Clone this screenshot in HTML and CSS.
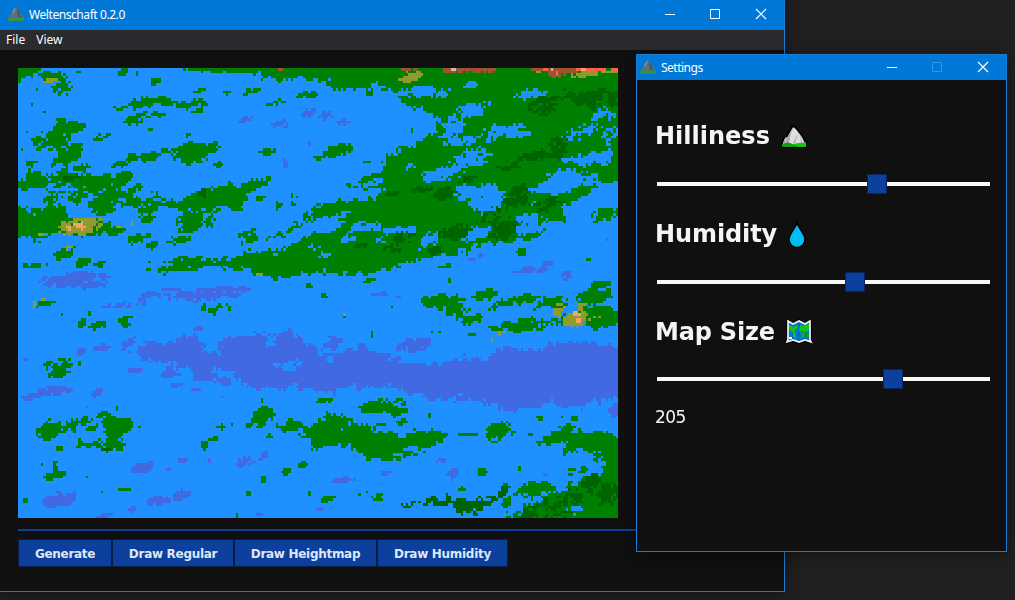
FILE: index.html
```
<!DOCTYPE html>
<html lang="en">
<head>
<meta charset="utf-8">
<title>Weltenschaft 0.2.0</title>
<link rel="stylesheet" href="styles.css">
</head>
<body>
<svg class="defs" width="0" height="0">
  <symbol id="peak" viewBox="0 0 16 16">
    <path d="M1 13 2 9 4 7 5 4 7 2 8 0 10 3 12 5 13 8 15 10 15 13Z" fill="#596f7b"/>
    <path d="M8 1 7 5 5 8 4 7 5 4Z" fill="#7d8d98"/>
    <path d="M9 2 12 6 12 9 14 12 10 11Z" fill="#425968"/>
    <path d="M0 12 4 11 8 12 12 11 16 12V15H0Z" fill="#33924b"/>
  </symbol>
</svg>
<main class="desktop">
  <section class="window main-window">
    <header class="titlebar">
      <svg class="app-icon"><use href="#peak"/></svg>
      <span class="title">Weltenschaft 0.2.0</span>
      <svg class="controls" viewBox="0 0 106 12"><path d="M1 6.500H11M46.500 1.500H55.500V10.500H46.500Z"/><path class="cross" d="M92 1 102 11M102 1 92 11"/></svg>
    </header>
    <nav class="menu"><span>File</span><span>View</span></nav>
    <div class="content">
      <canvas class="map" id="map" width="240" height="180"></canvas>
      <div class="rule"></div>
      <div class="buttons">
        <button class="generate">Generate</button><button class="regular">Draw Regular</button><button class="height">Draw Heightmap</button><button class="humidity">Draw Humidity</button>
      </div>
    </div>
  </section>
  <section class="window settings">
    <header class="titlebar">
      <svg class="app-icon"><use href="#peak"/></svg>
      <span class="title">Settings</span>
      <svg class="controls" viewBox="0 0 106 12"><path d="M1 6.500H11"/><path class="disabled" d="M46.500 1.500H55.500V10.500H46.500Z"/><path class="cross" d="M92 1 102 11M102 1 92 11"/></svg>
    </header>
    <div class="panel">
      <div class="setting">
        <h2><span class="hill-label">Hilliness</span>
          <svg class="emoji hill" viewBox="0 0 28 26"><path d="M2 23V19L4 14 7 12 9 8 12 3 14 2 17 5 20 9 23 13 26 19V23Z" fill="#dedede" stroke="#000" stroke-width="2"/><path d="M14 2 11 9 9 19 5 19 8 12ZM18 9 15 19 13 19ZM6 12 5 19 3 19Z" fill="#aaa"/><path d="M20 10 23 19 21 19Z" fill="#bbb"/><path d="M2 20 8 18.500 13 20 19 19 26 18.500V23H2Z" fill="#16c60c"/><path d="M2 20 8 18.500 14 21 18 22V23H2Z" fill="#139c18"/></svg></h2>
        <div class="slider"><i class="thumb hill-thumb"></i></div>
      </div>
      <div class="setting">
        <h2><span class="humid-label">Humidity</span>
          <svg class="emoji drop" viewBox="0 0 18 28"><path d="M9 2C7 8 1 13 1 18.500a8 8 0 0 0 16 0C17 13 11 8 9 2Z" fill="#00bcf2" stroke="#000" stroke-width="1.500"/></svg></h2>
        <div class="slider"><i class="thumb humid-thumb"></i></div>
      </div>
      <div class="setting">
        <h2><span class="size-label">Map Size</span>
          <svg class="emoji world" viewBox="0 0 28 26"><path id="sheet" d="M3 2 8 5 14 2 20 5 25 2V21L26 23 20 21 14 23 8 21 2 23 3 20Z" fill="#0078d7" stroke="#000" stroke-width="4"/><path d="M3 2 8 5 14 2 20 5 25 2V21L26 23 20 21 14 23 8 21 2 23 3 20Z" fill="#0078d7" stroke="#f2f2f2" stroke-width="1.700"/><path d="M8 6V20M14 4V21M20 6V20" stroke="#005eb0"/><path d="M4 6 8 8 12 6 13 9 11 10 9 13 11 15 10 19 8 18 8 14 5 11 4 8ZM15 6 18 7 24 5 24 10 22 13 20 12 19 18 17 18 16 13 14 12Z" fill="#16c60c"/><path d="M16 11 19 12 18 16 17 17M21 15H24V18H21Z" fill="#139c18"/><path d="M4 18H7V20H4Z" fill="#fff"/></svg></h2>
        <div class="slider"><i class="thumb size-thumb"></i></div>
        <output>205</output>
      </div>
    </div>
  </section>
</main>
<script src="map.js"></script>
</body>
</html>
```

FILE: styles.css
```
* { box-sizing: border-box; }
body { margin: 0; overflow: hidden; background: #202020; font-family: Verdana, "DejaVu Sans", sans-serif; color: #f5f5f5; }
.defs { position: absolute; }
.desktop { position: relative; width: 1015px; height: 600px; overflow: hidden; background: #202020; }
.window { position: absolute; display: flex; flex-direction: column; background: #101010; border: 1px solid #167fd4; box-shadow: 0 3px 14px rgba(0, 0, 0, .4); }
.main-window { left: 0; top: 0; width: 785px; height: 592px; border-top: 0; border-left: 0; }
.settings { left: 636px; top: 54px; width: 371px; height: 498px; }
.titlebar { display: flex; align-items: center; flex: none; background: #0078d7; height: 30px; padding: 0 18px 2px 8px; font: 12px "Noto Sans", sans-serif; color: #fff; }
.app-icon { width: 16px; height: 16px; margin-right: 5px; }
.title { flex: 1; white-space: nowrap; letter-spacing: -.43px; }
.controls { width: 106px; height: 12px; fill: none; stroke: #fff; stroke-width: 1; margin-right: -4px; }
.controls .disabled { stroke: #3294e2; }
.controls .cross { stroke-width: 1.2; }
.settings .titlebar { height: 25px; padding-left: 3px; padding-right: 18px; padding-bottom: 1px; }
.settings .title { letter-spacing: -.5px; }
.menu { display: flex; flex: none; gap: 11px; height: 20px; align-items: center; padding: 0 0 2px 6px; background: #2a2b2e; font: 12px "Noto Sans", sans-serif; color: #fff; }
.content { padding: 18px 0 0 18px; }
.map { display: block; width: 600px; height: 450px; image-rendering: pixelated; }
.rule { height: 2px; margin: 11px 18px 8px 0; background: #0d409c; }
.buttons { display: flex; }
.buttons button { height: 28px; padding: 1px 0 0; border: 1px solid #071d44; background: #0d409c; color: #dde7f8; font: bold 12px Verdana, "DejaVu Sans", sans-serif; letter-spacing: -.3px; white-space: nowrap; }
.buttons .generate { width: 94px; }
.buttons .regular { width: 122px; }
.buttons .height { width: 143px; }
.buttons .humidity { width: 131px; }
.panel { padding: 41px 16px 0 18px; }
.setting { height: 98px; }
h2 { display: flex; align-items: center; margin: 0; height: 30px; font-size: 24px; line-height: 30px; }
h2 span { white-space: nowrap; }
.hill-label { width: 125px; }
.humid-label { width: 133px; letter-spacing: -.1px; }
.size-label { width: 130px; letter-spacing: -.2px; }
.emoji { width: 28px; height: 26px; flex: none; margin-top: 1px; }
.emoji.drop { width: 18px; height: 28px; }
.emoji.world { margin-top: 0; }
.slider { position: relative; width: 333px; height: 4px; margin: 31px 0 0 2px; background: #f8f8f5; }
.setting:last-child .slider { margin-top: 30px; }
.thumb { position: absolute; top: -8px; width: 20px; height: 20px; border: 1px solid #06235c; background: #0d409c; }
.hill-thumb { left: 210px; }
.humid-thumb { left: 188px; }
.size-thumb { left: 226px; }
output { display: block; margin-top: 25px; font-size: 17px; line-height: 22px; letter-spacing: -.6px; }
```

FILE: map.js
```
const W = 240, H = 180;
const cells = new Array(W * H).fill('w');
const colors = { w: '#1e90ff', r: '#4169e1', g: '#008000', d: '#006400', o: '#8f9a30', s: '#f4a460', b: '#a0522d', t: '#ff6347', c: '#c0c0c0' };

function hash(x, y) {
  let n = Math.imul(x, 374761393) + Math.imul(y, 668265263) + 9187;
  n = Math.imul(n ^ (n >>> 13), 1274126177);
  return ((n ^ (n >>> 16)) >>> 0) / 4294967296;
}
function noise(x, y) {
  const i = Math.floor(x), j = Math.floor(y), u = x - i, v = y - j;
  const a = hash(i, j) * (1 - u) + hash(i + 1, j) * u;
  const b = hash(i, j + 1) * (1 - u) + hash(i + 1, j + 1) * u;
  return a * (1 - v) + b * v;
}
function grain(x, y) {
  return noise(x / 2.2 + 50, (y + x * 0.35) / 1.1 + 30) * 0.62 + hash(x + 900, y) * 0.38;
}
function inside(x, y, p) {
  let hit = false;
  for (let i = 0, j = p.length - 2; i < p.length; j = i, i += 2) {
    if ((p[i + 1] > y) !== (p[j + 1] > y) && x < (p[j] - p[i]) * (y - p[i + 1]) / (p[j + 1] - p[i + 1]) + p[i]) hit = !hit;
  }
  return hit;
}

/* p: color density outline; b: color followed by x,y,width,height,density patches. */
function sector(ox, oy, text) {
  for (const line of text.trim().split('\n')) {
    const t = line.trim().split(/\s+/), kind = t[0], color = t[1];
    if (kind === 'p') {
      const density = +t[2];
      const p = t.slice(3).flatMap(q => q.split(',').map(Number)).map((v, i) => v / 7.5 + (i % 2 ? oy : ox));
      const xs = p.filter((_, i) => i % 2 === 0), ys = p.filter((_, i) => i % 2);
      const x0 = Math.max(0, Math.floor(Math.min(...xs) - 3)), x1 = Math.min(W - 1, Math.max(...xs) + 3);
      const y0 = Math.max(0, Math.floor(Math.min(...ys) - 3)), y1 = Math.min(H - 1, Math.max(...ys) + 3);
      for (let y = y0; y <= y1; y++) for (let x = x0; x <= x1; x++) {
        const jx = (noise(x / 2, y / 2) - .5) * 3 + (hash(x, y) - .5) * 3;
        const jy = (noise(x / 2 + 80, y / 2) - .5) * 2.5 + (hash(x + 300, y) - .5) * 1.4;
        const px = x < 2 || x > W - 3 ? x + .5 : x + .5 + jx;
        const py = y < 1 || y > H - 2 ? y + .5 : y + .5 + jy;
        if (inside(px, py, p) && grain(x, y) < density * .75 + .25) cells[y * W + x] = color;
      }
    } else {
      for (const item of t.slice(2)) {
        const [bx, by, bw, bh, dens = 1] = item.split(',').map(Number);
        const small = bw < 17 && bh < 17;
        const cx = bx / 7.5 + ox, cy = by / 7.5 + oy;
        const rx = Math.max(.7, bw / (small ? 15 : 13)), ry = Math.max(.6, bh / (small ? 15 : 13));
        const x0 = Math.max(0, Math.floor(cx - rx - 1)), x1 = Math.min(W - 1, cx + rx + 1);
        const y0 = Math.max(0, Math.floor(cy - ry - 1)), y1 = Math.min(H - 1, cy + ry + 1);
        for (let y = y0; y <= y1; y++) for (let x = x0; x <= x1; x++) {
          const dx = (x + .5 - cx) / rx, dy = (y + .5 - cy) / ry;
          const slant = rx > 2 ? dy + dx * .35 : dy;
          const r = dx * dx + slant * slant;
          if (r < 1.3 && grain(x, y) < dens * .62 + .3 - r * (small ? .2 : .36)) cells[y * W + x] = color;
        }
      }
    }
  }
}

sector(0, -3.2, `
p g 1 495,24 900,24 900,60 840,55 790,62 730,50 720,38 660,42 600,36 530,32
p g .65 0,24 75,24 70,35 140,35 140,52 100,62 60,48 20,55 0,62
p g .65 280,140 330,128 380,108 450,112 520,125 575,118 570,135 500,140 420,135 380,142 330,140 300,152
b g 135,82,60,30,.85 315,38,30,22,.9 358,40,20,12,.7 412,62,28,18,.9 370,175,90,40,.45 340,182,35,18,.9 420,165,50,16,.6 540,150,80,20,.5 545,92,30,8 630,88,40,25,.5 695,92,45,18,.8 870,104,60,16,.9 770,128,60,18,.5
b g 150,203,80,34 130,180,30,12,.7 100,240,120,50,.8 160,278,60,45,.9 130,300,60,60,.5 30,315,50,30,.5 190,325,60,30,.7 255,232,60,24,.5
p g 1 0,355 20,335 60,335 90,352 88,380 50,385 20,392 0,385
b g 150,355,100,46 235,372,100,44 310,355,60,35,.9 265,420,80,65 330,415,50,50,.8 110,410,60,50,.6 180,410,60,50,.7 350,385,50,30,.7 390,430,70,60,.7 390,478,40,20,.8
p g 1 0,430 20,455 70,455 110,440 150,445 160,480 215,480 270,490 275,515 220,520 200,525 130,520 100,525 50,530 20,525 0,530
b g 290,512,45,30,.9 140,578,50,36,.9 60,535,50,30,.5 360,535,60,30,.7 405,555,40,20 480,540,70,22,.7 195,608,35,25 245,610,40,30,.6 50,615,70,14,.6 390,630,8,8
b g 340,290,30,22 390,288,55,25 300,315,45,18 600,313,20,20 520,275,115,48 580,262,40,35,.7 745,277,45,20 550,305,50,15,.5 510,307,12,16 440,270,20,12
p g 1 410,435 480,420 510,405 560,385 610,378 680,372 740,352 775,348 735,378 690,400 688,430 665,452 600,438 540,455 500,450 440,440
b g 520,485,80,50,.9 580,470,60,60,.5 690,530,65,40,.7 505,610,110,36 440,620,40,40,.6
p g 1 560,600 640,592 700,572 760,580 800,570 850,570 900,575 900,640 850,635 830,655 770,655 720,640 670,625 620,622 580,610
p g .55 730,540 790,520 840,480 880,450 900,440 900,480 840,505 800,530 740,545
p g .7 760,570 820,545 900,515 900,555 850,575 800,570
b g 780,435,20,40,.6 825,420,35,30,.7 872,679,20,12 725,412,22,14 395,606,8,8 40,133,8,8 78,156,8,8 25,217,8,8 10,268,8,8 146,104,8,8 55,88,8,8 182,36,8,8 397,207,14,8 508,226,14,10
b o 185,500,100,42,.9 140,500,40,30,.7 235,488,50,30,.6 100,60,40,12,.9 725,642,20,10 68,524,16,10 150,565,40,20,.5 340,488,8,8 300,500,10,8 813,600,8,8
b s 180,490,35,8 185,502,25,22,.65 152,502,8,14
b d 552,397,20,26,.9 160,350,40,14 412,65,16,8
b b 787,26,16,8
b r 685,178,45,45,.5 785,192,55,22,.8 868,160,35,25,.8 802,310,14,28,.8 165,658,170,38,.9 230,675,70,22,.9 620,686,140,10 460,686,50,8 873,249,8,12
`);
sector(120, -3.2, `
p g 1 0,24 900,24 900,360 850,370 790,410 740,430 730,480 690,500 650,530 600,545 530,545 440,570 400,585 350,590 270,605 200,625 120,640 60,638 0,635 0,430 100,425 160,412 210,395 150,385 100,385 130,350 200,335 200,300 240,265 300,250 310,235 350,220 360,180 320,145 250,128 240,105 180,70 130,90 80,95 40,75 0,60
b w 300,97,120,28,.9 370,100,60,26,.7 640,102,80,25,.9 460,75,35,20 460,150,100,45,.75 400,205,60,60,.85 430,240,100,30,.8 570,215,130,50,.7 855,165,70,50,.7 880,220,50,50,.7
p w .8 720,235 780,205 850,190 820,215 760,237
p w 1 730,290 790,285 850,275 880,270 875,300 800,315 740,305
b w 730,365,110,60 810,360,60,50,.6 460,295,110,50,.7 370,340,110,40,.75 170,365,60,25,.6 270,320,60,20,.5
p w .85 410,375 470,380 540,365 560,400 540,440 480,465 450,430 400,400
p w .9 570,500 720,480 700,500 620,520 580,515
b w 460,520,110,40,.8 330,540,60,50,.7 30,490,80,40,.9 150,500,120,30,.7 70,465,50,30,.7 250,510,100,20,.9 90,535,40,24,.8 20,580,40,20,.7 640,390,110,14,.8 630,480,90,30,.7 200,540,60,30,.5 680,430,90,30,.4
b g 60,270,75,30,.95 5,290,30,14 150,662,30,12 850,672,60,20 380,620,35,18,.5 393,659,8,12 860,465,75,35,.9 820,600,25,8 281,214,8,12 150,94,25,20,.8 610,575,25,20 150,305,30,10,.6
p d .9 715,95 760,105 850,85 880,90 850,125 830,150 780,140 750,120
b d 680,135,85,45,.75 660,285,100,28,.9 720,265,70,60,.7 575,315,60,25,.8 380,400,60,30,.9 310,387,60,15 450,355,50,20,.7 600,410,65,55,.85 690,430,90,50,.5 520,470,90,45,.6 410,515,80,38,.95 560,510,80,50,.85 240,545,110,60,.5 350,570,50,30,.6 130,555,40,10 885,120,30,45,.9 225,400,30,12
p b 1 360,24 530,24 530,32 400,35
p b 1 640,24 785,24 785,40 730,48 690,35 650,32
b b 265,26,30,8 292,26,16,8
b t 715,40,14,10 820,29,75,13 885,29,30,14 685,28,14,8
b s 795,29,12,8
b c 403,26,16,8 700,26,8,8
b o 278,50,60,30,.8 800,42,80,14,.9 870,37,50,12,.9 660,33,14,8
b r 20,168,50,28,.6 75,185,32,16 635,630,90,18,.9 690,608,35,14 745,648,30,25,.8 460,597,18,8 488,586,16,8 865,539,8,8
`);
sector(0, 88.8, `
p r 1 345,190 370,155 450,155 490,140 550,140 555,185 600,182 605,145 650,140 720,125 750,130 740,150 790,125 830,115 830,140 870,160 900,160 900,295 820,292 690,295 650,265 640,235 580,240 530,265 510,230 480,215 430,215 380,205
b w 815,225,80,26,.7 760,155,35,28,.8
p r .95 340,35 390,5 440,15 510,0 640,0 680,5 640,18 560,30 510,32 470,25 400,20 370,40
b r 300,46,90,16,.8 330,165,50,40,.7 250,172,45,18 540,115,30,16 560,260,60,20 350,242,40,16,.8 460,245,50,40,.7 620,275,60,25,.6 530,300,25,8 110,300,90,24 40,318,45,18 235,308,32,18 375,532,55,30 125,628,90,38 430,630,75,22 485,615,50,30 440,538,40,12,.6 680,515,55,24,.8 735,497,30,22,.8 495,507,30,20,.7 475,285,30,10 20,205,16,8 190,185,30,18,.6 260,677,65,14,.5 340,655,20,18
b r 725,672,16,8 610,318,10,10 205,349,8,8 573,510,8,16
p g 1 555,55 600,48 635,38 638,48 600,60 560,80
b g 75,38,55,18 190,98,20,26 245,105,60,20,.8 325,95,40,36,.9 125,235,65,45,.9 90,220,40,20,.6 95,420,60,45 215,410,35,20,.8 258,373,35,18 300,412,70,45 270,395,35,28 123,475,22,10 110,528,14,30 110,555,55,20 320,597,40,10 22,633,16,12
p g 1 55,422 95,395 110,405 110,435 85,445
p g 1 120,405 160,395 190,382 230,382 190,405 150,425 120,430
p g .8 165,455 260,450 300,440 320,460 320,480 260,485 210,465 180,480
b g 735,380,60,50,.8 560,465,22,20,.9 590,445,30,8 610,410,22,12 640,402,8,12 690,405,14,12 755,440,20,12 735,568,16,16 805,545,22,14 852,523,24,18 657,677,14,10 690,610,14,10 873,608,8,8 131,73,8,8 213,68,8,8 183,219,8,8 363,410,8,8 70,523,8,8 206,562,8,8 250,607,8,8 730,332,8,8 295,355,8,8
p g 1 770,410 820,390 850,395 860,410 900,400 900,480 880,470 850,430 820,415 780,425
b o 50,43,14,14 75,29,12,12
b d 260,475,25,20,.7
`);
sector(120, 88.8, `
p r 1 0,190 60,190 100,172 150,170 200,195 240,200 250,220 300,225 370,215 420,200 500,205 550,170 610,175 660,180 700,158 760,155 800,148 860,172 900,170 900,325 860,332 800,345 740,348 700,335 660,352 600,358 575,368 540,345 480,325 430,325 385,340 350,325 310,322 250,305 200,290 150,290 100,282 40,308 0,300
b r 290,165,90,38,.85 40,160,50,35,.8 890,358,30,35 80,570,60,16,.9 370,512,30,16 405,548,30,30,.8 205,548,30,12 185,12,45,12 240,20,14,8 5,660,25,8 682,551,14,8
b w 38,208,18,14
p g 1 295,38 350,12 420,18 440,50 440,80 410,80 380,55 320,55
p g .9 505,60 540,35 600,12 665,12 660,35 620,35 560,50 515,65
p g .9 645,55 690,25 740,20 745,50 700,48 650,60
p g .95 520,110 600,85 650,75 640,95 740,85 790,50 860,48 900,70 900,95 820,120 800,100 700,105 640,115 600,128 540,120
b g 500,15,60,26 830,18,90,38 460,90,60,30,.7 190,345,110,36,.9 230,365,40,25,.9 262,363,25,10 20,330,45,12 160,134,8,18 78,80,8,12 220,50,8,8 18,18,20,12 460,132,18,8 340,124,8,8 365,124,8,8
b o 770,88,60,38 725,55,35,55,.6 840,83,80,20,.5 790,50,20,18,.8 520,146,8,8 545,129,8,8 558,124,8,8 78,73,8,8
b s 775,70,22,10 778,92,16,14
p g 1 0,390 40,370 75,370 110,400 150,405 155,430 210,425 250,440 290,425 350,425 380,430 400,430 360,460 310,480 260,490 230,510 160,508 125,495 120,475 60,470 0,482
b w 285,475,45,14,.8 70,416,8,8
b g 540,422,65,50,.9 470,432,20,12 440,432,30,10 250,395,25,14 180,405,40,12,.6 580,428,22,8 638,435,14,8 665,382,20,12 334,377,8,8 730,382,14,8 770,387,20,14 490,545,30,22,.7 604,532,8,12 650,600,110,45,.7 560,595,30,24 565,640,25,40 430,595,22,8 180,620,40,22,.7 30,627,35,18,.8 145,603,8,8 125,614,8,8 780,545,70,25,.5
p g 1 660,460 740,400 760,395 760,425 820,420 870,420 900,435 900,684 570,684 620,650 680,620 740,600 800,560 850,545 860,510 820,515 840,490 780,480 740,492 730,460
p d .85 250,640 340,630 400,620 460,635 540,615 520,640 480,665 430,665 390,640 330,640 260,650
p d .9 340,630 400,620 460,635 520,628 480,665 430,670 390,640
b d 555,603,28,28 815,580,45,44 870,610,65,60,.8 730,650,130,60,.6 640,660,60,40,.7 780,610,85,30,.6
b w 770,655,50,14 735,458,30,16,.6 850,500,40,22,.4
`);

const ctx = document.getElementById('map').getContext('2d');
for (let y = 0; y < H; y++) for (let x = 0; x < W; x++) {
  ctx.fillStyle = colors[cells[y * W + x]];
  ctx.fillRect(x, y, 1, 1);
}
```
